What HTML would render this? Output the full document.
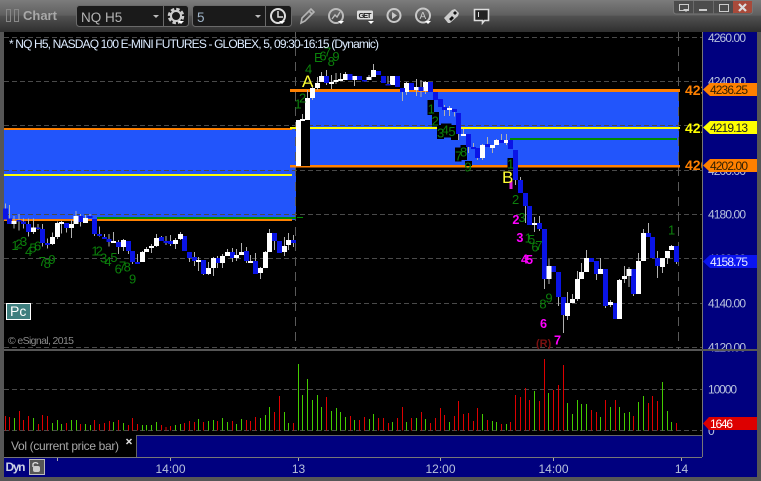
<!DOCTYPE html>
<html><head><meta charset="utf-8"><style>
html,body{margin:0;padding:0;background:#555;overflow:hidden}
svg{display:block;font-family:"Liberation Sans",sans-serif}
.g text{fill:#0b800b;font-size:39px}
.m text{fill:#f0f;font-size:38px;font-weight:bold}
.ax{fill:#b8c2dc;font-size:12px}
</style></head><body>
<svg width="761" height="481" viewBox="0 0 761 481" xmlns="http://www.w3.org/2000/svg">
<defs><linearGradient id="tb" x1="0" y1="0" x2="0" y2="1">
<stop offset="0" stop-color="#7c7c7c"/><stop offset=".48" stop-color="#5e5e5e"/><stop offset=".5" stop-color="#515151"/><stop offset="1" stop-color="#2f2f2f"/></linearGradient></defs>
<rect width="761" height="481" fill="#565656"/>
<rect width="761" height="32" fill="url(#tb)"/>
<!-- toolbar -->
<rect x="6.5" y="9.5" width="4" height="12" fill="none" stroke="#888"/><rect x="14.5" y="9.5" width="4" height="12" fill="none" stroke="#888"/>
<text x="23" y="20" font-size="13" font-weight="bold" fill="#a8a8a8">Chart</text>
<rect x="76.5" y="5.5" width="112" height="21" rx="3" fill="#1a1a1a" stroke="#6a6a6a"/>
<path d="M163.5 6V26" stroke="#6a6a6a"/>
<text x="81" y="22" font-size="13.5" fill="#b4b4b4">NQ H5</text>
<path d="M153 15h6l-3 3z" fill="#bbb"/>
<rect x="192.5" y="5.5" width="99" height="21" rx="3" fill="#1a1a1a" stroke="#6a6a6a"/>
<path d="M265.5 6V26" stroke="#6a6a6a"/>
<text x="197" y="22" font-size="13.5" fill="#9fb4c8">5</text>
<path d="M255 15h6l-3 3z" fill="#bbb"/>
<!-- gear -->
<circle cx="176" cy="16" r="5" fill="none" stroke="#ccc" stroke-width="2"/><circle cx="176" cy="16" r="7" fill="none" stroke="#ccc" stroke-width="2.5" stroke-dasharray="3.5 2"/>
<path d="M178 21h6l-3 3z" fill="#fff"/>
<!-- clock -->
<circle cx="278" cy="16" r="7" fill="none" stroke="#ddd" stroke-width="2"/><path d="M278 11V17H283" fill="none" stroke="#ddd" stroke-width="1.5"/>
<path d="M279 21h6l-3 3z" fill="#fff"/>
<!-- pencil -->
<path d="M301 23l1-5 9-9 3 3-9 9z M309 11l3 3" fill="none" stroke="#b4b4b4" stroke-width="1.6"/>
<!-- chart circle -->
<circle cx="336" cy="16" r="7" fill="none" stroke="#bbb" stroke-width="2"/><path d="M332 19l3-4 2 2 3-5" fill="none" stroke="#bbb" stroke-width="1.4"/>
<path d="M338 21h6l-3 3z" fill="#fff"/>
<!-- GET -->
<rect x="357" y="10.5" width="16" height="9" rx="1.5" fill="#ddd"/>
<text x="358.5" y="18" font-size="7.5" font-weight="bold" fill="#222" textLength="13">GET</text>
<path d="M368 21h6l-3 3z" fill="#fff"/>
<!-- play -->
<circle cx="394" cy="15.5" r="6.5" fill="none" stroke="#c8c8c8" stroke-width="2"/><path d="M392 12l5 3.5-5 3.5z" fill="#c8c8c8"/>
<!-- A -->
<circle cx="423" cy="15.5" r="7" fill="none" stroke="#c8c8c8" stroke-width="2"/><text x="419.5" y="19" font-size="10" fill="#c8c8c8">A</text>
<path d="M425 21h6l-3 3z" fill="#fff"/>
<!-- diamond -->
<path d="M444 18l8-8 3-1 4 4-1 3-8 7h-2z" fill="#ccc"/><path d="M449 19l3-3 2 2-3 3z M453 13l2-2 2 2-2 2z" fill="#111"/>
<!-- speech -->
<path d="M474.500 9.500h14v11h-4l-2 2.500v-2.500h-8z" fill="#222" stroke="#ddd" stroke-width="1.600"/><path d="M478.500 12v5" stroke="#ddd"/>
<!-- window controls -->
<path d="M673.500 1v10q0 3 3 3h73q3 0 3-3V1" fill="#4c4c4c" stroke="#777"/>
<path d="M693.500 1V14M713.500 1V14M733.500 1V14" stroke="#6a6a6a"/>
<path d="M733 1h19v10q0 2-2 2h-17z" fill="#a84a3a"/>
<path d="M679.500 4.500h9v6h-9z" fill="none" stroke="#ccc"/><path d="M683 9h6l-3 3z" fill="#ccc"/>
<path d="M699 10h8" stroke="#ccc" stroke-width="2"/>
<rect x="719.500" y="4.500" width="9" height="7" fill="none" stroke="#ccc"/>
<path d="M739 4l7 7M746 4l-7 7" stroke="#ddd" stroke-width="2.200"/>

<!-- chart bg -->
<rect x="4" y="32" width="698" height="317" fill="#000"/>
<rect x="4" y="129" width="292" height="91" fill="#2255fb"/>
<rect x="310" y="91" width="369" height="75" fill="#2255fb"/>
<!-- grid -->
<g stroke="#4a4a4a" stroke-dasharray="5 3" fill="none">
<path d="M4 37.500H702M4 81.500H702M4 125.500H702M4 170.500H702M4 214.500H702M4 258.500H702M4 303.500H702M4 347.500H702"/>
</g>
<path d="M295.500 32V349M678.500 32V349" stroke="#5a5a5a" stroke-dasharray="9 6" fill="none"/>
<!-- levels -->
<g shape-rendering="crispEdges">
<rect x="4" y="128" width="288" height="2" fill="#ff8000"/>
<rect x="4" y="174" width="288" height="2" fill="#ffff00"/>
<rect x="97" y="217" width="199" height="2" fill="#008a00"/>
<rect x="4" y="219" width="288" height="2" fill="#ff8000"/>
<rect x="297" y="217" width="6" height="1" fill="#008a00"/>
<rect x="290" y="89" width="390" height="3" fill="#ff8000"/>
<rect x="290" y="127" width="390" height="2" fill="#ffff00"/>
<rect x="510" y="138" width="167" height="2" fill="#008a00"/>
<rect x="290" y="165" width="390" height="2.500" fill="#ff8000"/>
</g>
<!-- candles left -->
<g transform="translate(0,60) scale(.33333)" fill="none" shape-rendering="crispEdges">
<path stroke="#b0b0b0" stroke-width="3" d="M16 430V445M28 435V492M42 468V505M57 462V512M71 475V505M85 475V530M100 475V522M114 492V510M128 492V560M142 535V566M157 518V555M172 485V537M185 483V520M199 489V518M214 480V534M228 453V492M241 462V500M256 465V489M270 462V474M283 477V528M298 500V530M313 522V537M327 522V560M341 516V549M355 540V582M370 537V573M385 543V582M398 573V612M412 582V612M427 573V606M440 561V576M454 552V579M469 522V561M484 528V543M498 528V555M512 525V558M526 534V567M541 516V540M554 528V573M568 576V606M583 576V618M596 591V633M610 600V645M625 606V645M640 591V648M653 588V624M667 582V624M682 567V588M697 564V606M710 567V603M725 549V585M739 561V609M752 585V609M766 579V642M781 621V657M796 573V624M808 507V576M823 519V570M838 543V579M853 531V588M866 519V570M880 525V561"/>
<path stroke="#0a14e6" stroke-width="15" d="M16 445V478M28 475V492M57 480V485M71 485V492M85 492V516M114 502V507M128 507V549M142 549V555M199 489V504M241 468V486M270 468V474M283 477V522M298 522V528M313 531V537M327 537V546M355 546V561M385 543V573M398 573V606M412 606V612M484 531V543M498 543V549M512 543V552M554 528V573M568 576V594M583 591V603M610 600V642M653 594V609M697 576V594M739 573V603M766 603V642M823 519V543M838 543V579M880 540V549"/>
<path stroke="#fff" stroke-width="15" d="M42 483V492M100 502V516M157 531V552M172 489V531M185 486V492M214 492V504M228 468V492M256 474V489M341 543V549M370 540V561M427 576V606M440 567V576M454 558V564M469 534V558M526 540V552M541 522V537M596 600V606M625 624V642M640 594V624M667 588V609M682 576V588M710 585V594M725 576V585M752 603V609M781 624V639M796 576V624M808 519V576M853 558V576M866 540V555"/>
</g>
<!-- black behind big candle -->
<rect x="301" y="92" width="9" height="74" fill="#000"/>
<!-- candles middle -->
<g transform="translate(285,60) scale(.33333)" fill="none" shape-rendering="crispEdges">
<path fill="#000" d="M427 120h20v45h-20zM441 156h21v44h-21zM456 195h21v42h-21zM468 190h32v42h-32zM498 195h22v45h-22zM510 262h20v43h-20zM526 255h20v45h-20zM540 303h21v15h-21zM667 294h18v36h-18z"/>
<path stroke="#b0b0b0" stroke-width="3" d="M53 162V177M67 90V114M82 75V120M97 51V90M110 36V48M124 30V75M139 45V87M153 39V72M167 39V57M181 36V42M208 48V78M252 45V60M265 12V30M309 48V72M352 84V123M365 66V105M394 57V108M408 60V111M422 63V102M479 135V168M493 138V168M508 147V170M520 159V240M535 207V228M550 222V279M565 249V261M578 264V300M592 252V300M607 231V261M622 255V279M634 237V255M650 222V249M664 222V255M691 270V375M706 351V399"/>
<path stroke="#fff" stroke-width="15" d="M40 180V318M53 177V183M67 114V180M82 84V114M97 69V84M110 48V66M139 66V72M153 60V66M167 57V63M181 42V60M208 48V60M252 51V60M265 30V51M322 48V75M365 69V96M394 81V90M422 66V93M493 144V150M535 222V228M592 255V294M622 255V264M634 240V255M664 240V249"/>
<path stroke="#0a14e6" stroke-width="15" d="M124 48V69M195 42V60M223 48V60M238 60V64M280 33V45M295 48V69M309 72V76M337 48V81M352 84V96M380 69V90M408 81V93M437 66V96M452 96V120M466 117V141M479 141V150M508 147V156M520 159V222M550 222V261M565 261V267M578 264V294M607 252V261M650 240V249M676 240V267M691 270V360M706 360V399"/>
<path stroke="#e020e0" stroke-width="8" d="M678 363V387"/>
</g>
<!-- candles right -->
<g transform="translate(490,190) scale(.33333)" fill="none" shape-rendering="crispEdges">
<path stroke="#b0b0b0" stroke-width="3" d="M107 9V99M133 81V126M148 78V123M163 117V297M177 207V282M205 246V348M220 321V429M233 306V390M247 312V339M262 243V333M275 219V267M289 180V246M319 213V270M332 204V252M347 237V354M362 330V351M376 339V387M389 267V387M403 228V279M417 231V291M431 237V318M445 189V312M461 117V213M475 99V141M503 183V264M518 204V249M532 183V222M545 165V180M560 168V222"/>
<path stroke="#0a14e6" stroke-width="15" d="M107 9V48M118 48V105M148 99V117M163 117V267M190 228V246M205 246V321M220 321V375M304 204V216M319 213V252M347 237V348M376 339V387M431 237V312M475 129V141M488 141V204M503 204V228M560 168V216"/>
<path stroke="#fff" stroke-width="15" d="M133 99V105M177 228V267M233 339V378M247 327V339M262 267V327M275 246V267M289 204V246M332 237V252M362 336V345M389 270V387M403 258V267M417 237V258M445 213V312M461 129V213M518 204V231M532 183V204M545 168V180"/>
</g>
<!-- green numerals -->
<g class="g" transform="translate(0,60) scale(.33333)">
<text x="34" y="570">1</text><text x="46" y="566">2</text><text x="60" y="558">3</text><text x="75" y="588">4</text><text x="88" y="578">5</text><text x="102" y="572">6</text><text x="116" y="618">7</text><text x="131" y="624">8</text><text x="145" y="612">9</text>
<text x="274" y="587">1</text><text x="287" y="587">2</text><text x="300" y="607">3</text><text x="313" y="618">4</text><text x="331" y="606">5</text><text x="344" y="640">6</text><text x="357" y="632">7</text><text x="371" y="634">8</text><text x="387" y="670">9</text>
</g>
<g class="g" transform="translate(285,60) scale(.33333)">
<text x="28" y="145">1</text><text x="42" y="128">2</text><text x="60" y="40">4</text>
<text x="428" y="160">1</text><text x="440" y="196">2</text><text x="456" y="232">3</text><text x="470" y="224">4</text><text x="490" y="228">5</text><text x="510" y="302">7</text><text x="525" y="290">8</text><text x="538" y="334">9</text><text x="666" y="326">1</text>
</g>
<g class="g" transform="translate(290,40) scale(.33333)">
<text x="72" y="66">E</text><text x="88" y="62">6</text><text x="102" y="50">7</text><text x="113" y="78">8</text><text x="127" y="63">9</text>
</g>
<g class="g" transform="translate(490,190) scale(.33333)">
<text x="66" y="42">2</text><text x="85" y="96">3</text><text x="104" y="158">1</text><text x="114" y="162">5</text><text x="124" y="184">6</text><text x="136" y="180">7</text><text x="148" y="355">8</text><text x="166" y="338">9</text><text x="534" y="133">1</text>
</g>
<g class="m" transform="translate(490,190) scale(.33333)">
<text x="67" y="102">2</text><text x="79" y="156">3</text><text x="93" y="220">4</text><text x="108" y="222">5</text><text x="150" y="414">6</text><text x="192" y="464">7</text>
</g>
<text x="536" y="347" font-size="11" font-weight="bold" fill="#7a1010">(R)</text>
<text x="302" y="87" font-size="17" fill="#ffff33">A</text>
<text x="502" y="183" font-size="17" fill="#ffff33">B</text>
<!-- right stub labels -->
<text x="685" y="95" font-size="14" font-weight="bold" fill="#ff8000">423</text>
<text x="685" y="133" font-size="14" font-weight="bold" fill="#ffff00">421</text>
<text x="685" y="170" font-size="14" font-weight="bold" fill="#ff8000">420</text>
<!-- header -->
<text x="9" y="48" font-size="12" fill="#dcebff" textLength="370" lengthAdjust="spacing">* NQ H5, NASDAQ 100 E-MINI FUTURES - GLOBEX, 5, 09:30-16:15 (Dynamic)</text>
<rect x="6.500" y="303.500" width="24" height="16" fill="#3f7f7f" stroke="#fff"/>
<text x="10" y="316" font-size="14" fill="#fff">Pc</text>
<text x="8" y="344" font-size="10.500" fill="#8a8a8a" textLength="66">© eSignal, 2015</text>
<!-- volume pane -->
<rect x="4" y="351" width="698" height="84" fill="#000"/>
<path d="M4 389.500H702M4 430.500H702" stroke="#4a4a4a" stroke-dasharray="5 3" fill="none"/>
<g transform="translate(0,350) scale(.33333)" fill="none" stroke-width="3" shape-rendering="crispEdges">
<path stroke="#dd0000" d="M16 241V198M28 241V201M58 241V183M71 241V210M85 241V198M115 241V222M128 241V195M142 241V198M199 241V219M242 241V222M284 241V210M298 241V222M313 241V219M328 241V213M355 241V210M385 241V225M398 241V204M412 241V222M484 241V225M498 241V231M512 241V228M554 241V219M568 241V213M583 241V216M611 241V216M653 241V213M697 241V213M739 241V210M752 241V213M767 241V201M823 241V186M838 241V138M880 241V219M980 241V141M1051 241V198M1079 241V210M1094 241V201M1136 241V204"/>
<path stroke="#44cc00" d="M43 241V204M100 241V204M157 241V219M172 241V210M185 241V222M214 241V210M229 241V210M256 241V222M271 241V225M341 241V216M370 241V219M427 241V225M440 241V225M454 241V225M469 241V216M527 241V225M541 241V222M596 241V207M625 241V213M640 241V210M667 241V204M682 241V216M710 241V222M725 241V207M781 241V204M796 241V195M809 241V171M853 241V186M866 241V219M895 241V42M908 241V135M922 241V87M937 241V150M952 241V135M965 241V171M994 241V183M1009 241V174M1022 241V186M1037 241V201M1064 241V210M1108 241V207M1121 241V192"/>
</g>
<g transform="translate(380,350) scale(.33333)" fill="none" stroke-width="3" shape-rendering="crispEdges">
<path stroke="#dd0000" d="M10 241V204M25 241V219M52 241V204M67 241V171M94 241V204M124 241V186M151 241V219M166 241V204M181 241V174M193 241V195M223 241V198M235 241V153M250 241V192M265 241V189M280 241V213M292 241V174M322 241V210M364 241V222M391 241V216M406 241V135M421 241V141M436 241V114M449 241V150M478 241V153M493 241V27M520 241V120M535 241V105M550 241V45M634 241V180M649 241V186M676 241V150M706 241V150M760 241V198M805 241V159M817 241V138M832 241V153M889 241V219"/>
<path stroke="#44cc00" d="M37 241V216M79 241V216M109 241V204M136 241V207M208 241V216M307 241V192M337 241V213M349 241V216M379 241V222M463 241V123M505 241V129M562 241V159M577 241V192M592 241V150M604 241V162M619 241V162M661 241V201M691 241V171M718 241V171M733 241V189M748 241V186M775 241V156M790 241V138M847 241V96M862 241V183M874 241V216"/>
</g>
<!-- lower strips -->
<rect x="4" y="435" width="132" height="22" fill="#000"/>
<rect x="136" y="435" width="566" height="22" fill="#00007f"/>
<path d="M136 435.500H702M136.500 435V457" stroke="#666" fill="none"/>
<text x="11" y="450" font-size="12" fill="#a8a8a8" textLength="108">Vol (current price bar)</text>
<path d="M126.500 439l5 5M131.500 439l-5 5" stroke="#ddd" stroke-width="1.500"/>
<rect x="4" y="457" width="753" height="20" fill="#00007f"/>
<path d="M4 457.500H702" stroke="#777"/>
<path d="M57.500 458v3M170.500 458v3M298.500 458v3M440.500 458v3M553.500 458v3M681.500 458v3" stroke="#aaa"/>
<text x="5.500" y="471" font-size="12" font-weight="bold" fill="#ccd2e4" textLength="20">Dyn</text>
<rect x="29.500" y="459.500" width="15" height="15" fill="#555" stroke="#bbb"/>
<path d="M33 467v-3a3 3 0 0 1 5 0" fill="none" stroke="#ddd" stroke-width="1.300"/><rect x="33" y="466" width="7" height="6" rx="2" fill="#ccc"/>
<g class="ax" text-anchor="middle">
<text x="170.500" y="473">14:00</text><text x="298.500" y="473">13</text><text x="440.500" y="473">12:00</text><text x="553.500" y="473">14:00</text><text x="681.500" y="473">14</text>
</g>
<!-- axis -->
<rect x="702" y="32" width="55" height="425" fill="#00007f"/>
<path d="M702.500 32V457" stroke="#777"/>
<g class="ax">
<text x="708" y="42" textLength="38">4260.00</text>
<text x="708" y="85.500" textLength="38">4240.00</text>
<text x="708" y="175" textLength="38">4200.00</text>
<text x="708" y="218.500" textLength="38">4180.00</text>
<text x="708" y="263" textLength="38">4160.00</text>
<text x="708" y="307.500" textLength="38">4140.00</text>
<text x="708" y="351.500" textLength="38">4120.00</text>
<text x="708" y="393.500" textLength="29">10000</text>
<text x="708" y="435">0</text>
</g>
<rect x="4" y="349" width="753" height="2" fill="#565656"/>
<!-- tags -->
<path d="M703 89.500l7-6.500h47v13h-47z" fill="#ff8000"/>
<text x="710" y="94" font-size="12" fill="#332000" textLength="38">4236.25</text>
<path d="M703 127.500l7-6.500h47v13h-47z" fill="#ffff00"/>
<text x="710" y="132" font-size="12" fill="#222" textLength="38">4219.13</text>
<path d="M703 165.500l7-6.500h47v13h-47z" fill="#ff8000"/>
<text x="710" y="170" font-size="12" fill="#332000" textLength="38">4202.00</text>
<path d="M703 261.500l7-6.500h47v13h-47z" fill="#0a14f0"/>
<text x="710" y="266" font-size="12" fill="#e8ecff" textLength="38">4158.75</text>
<path d="M703 423.500l6-6.500h48v13h-48z" fill="#dd0000"/>
<text x="710" y="428" font-size="12" fill="#fff" textLength="23">1646</text>
</svg>
</body></html>
